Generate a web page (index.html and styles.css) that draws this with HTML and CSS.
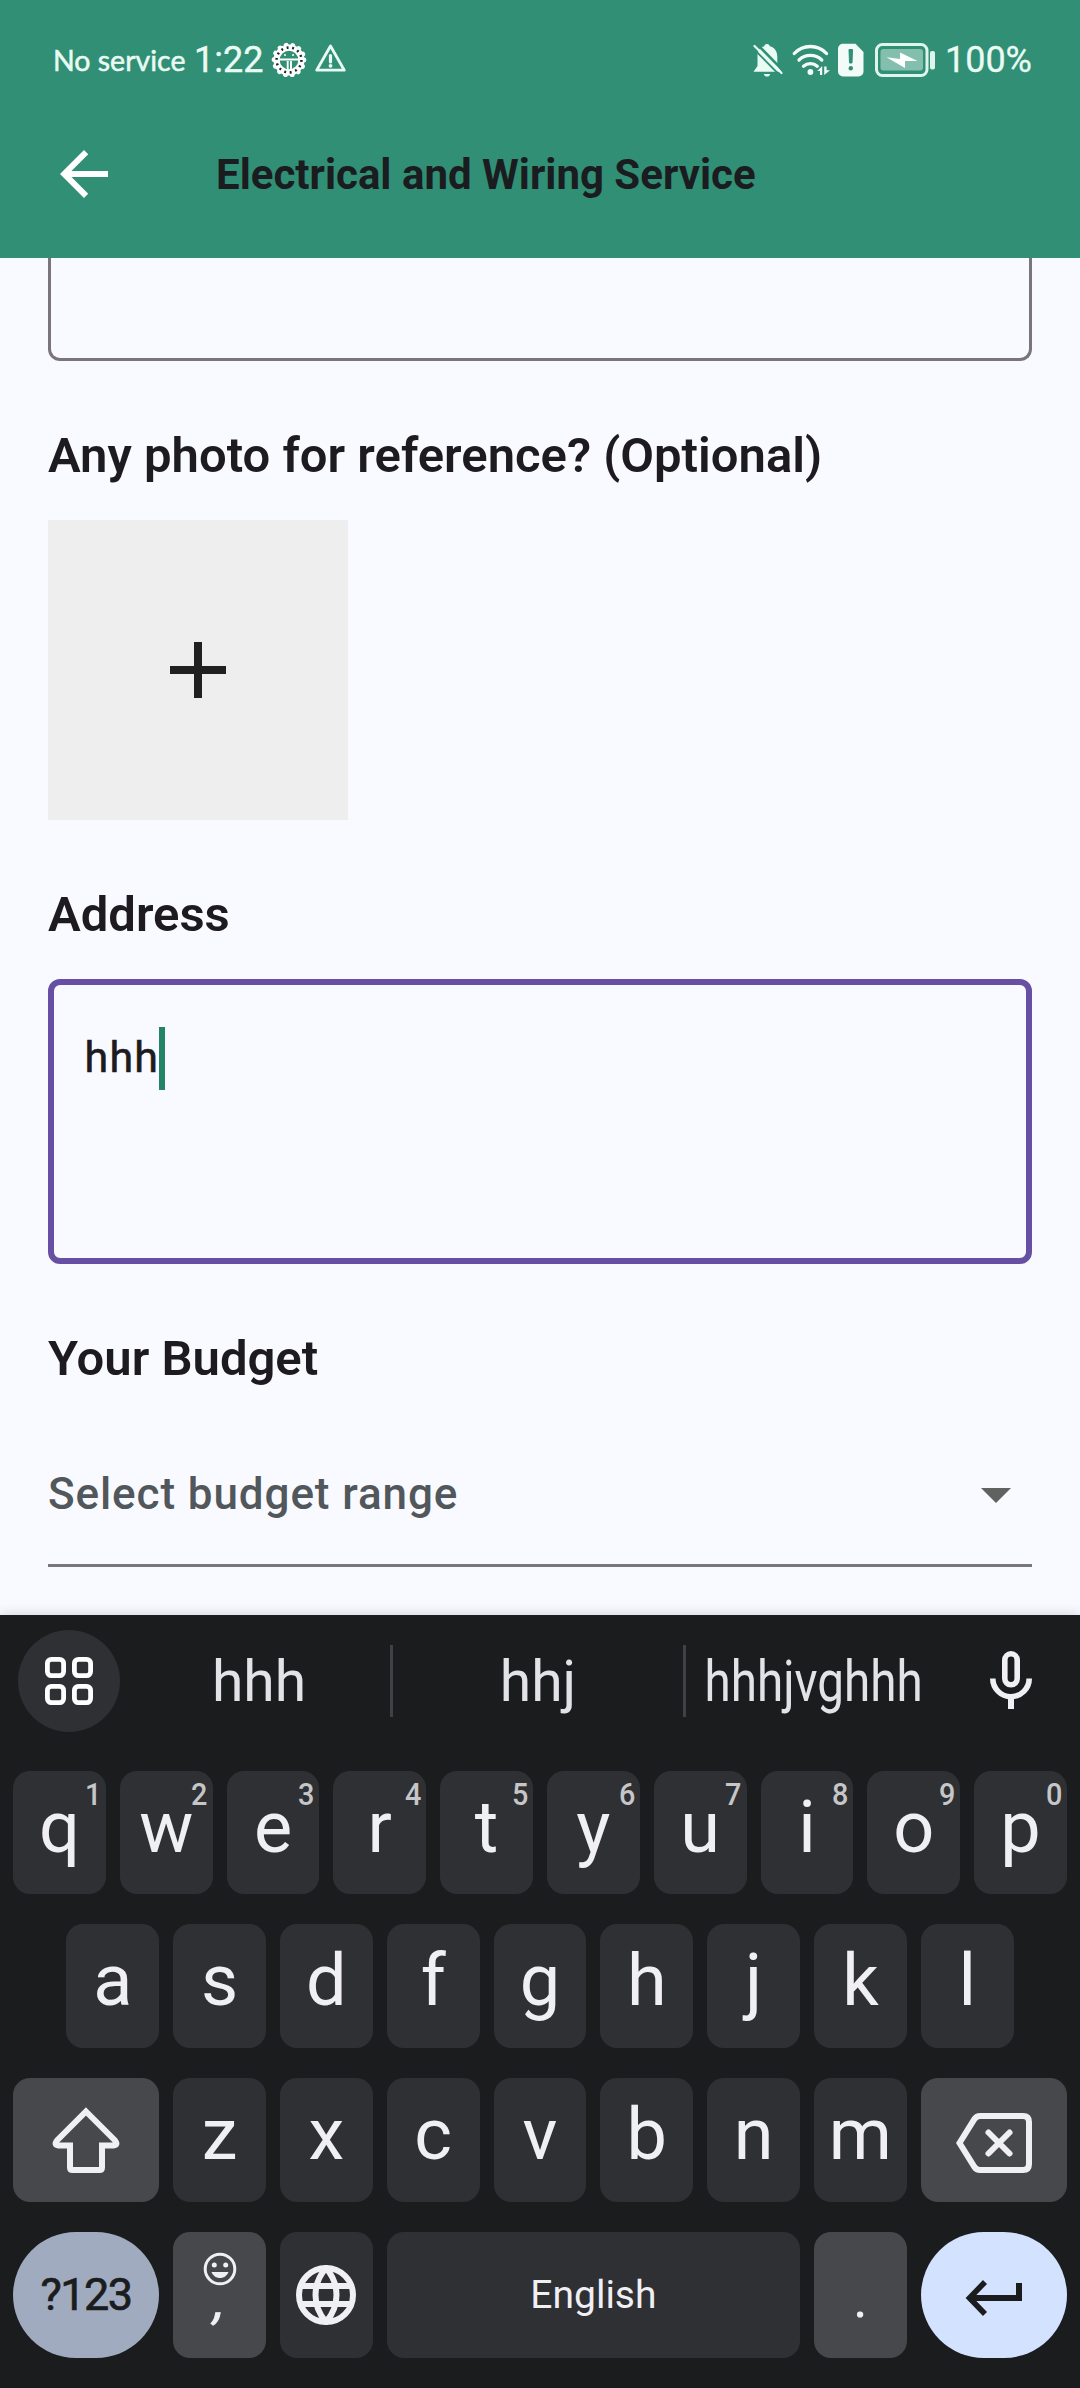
FILE: index.html
```html
<!DOCTYPE html>
<html lang="en">
<head>
<meta charset="utf-8">
<title>Electrical and Wiring Service</title>
<link rel="stylesheet" href="styles.css">
</head>
<body>
<div class="screen">
  <header class="header">
    <div class="status">
      <div class="status-left">
        <span class="carrier">No service</span>
        <span class="clock">1:22</span>
        <svg class="ic-gear" width="36" height="36" viewBox="0 0 36 36">
          <circle cx="18" cy="18" r="13" fill="none" stroke="#fff" stroke-width="5"/>
          <circle cx="18" cy="18" r="15" fill="none" stroke="#fff" stroke-width="4.800" stroke-linecap="round" stroke-dasharray="0.1 6.632"/>
          <circle cx="18" cy="18" r="12.400" fill="none" stroke="#1c2a25" stroke-width="2.600" stroke-dasharray="1.900 3.665"/>
          <circle cx="18" cy="18" r="10.200" fill="#318f75" stroke="#fff" stroke-width="1.800"/>
          <path d="M8 17.500h20M16.700 19v9M20 19v9" stroke="#fff" stroke-width="1.900" fill="none"/>
          <circle cx="14" cy="13" r="1" fill="#fff"/><circle cx="22" cy="13" r="1" fill="#fff"/>
        </svg>
        <svg class="ic-warn" width="33" height="30" viewBox="0 0 33 30">
          <path d="M16.500 3L30.300 27.200H2.700Z" fill="none" stroke="#e9fbf3" stroke-width="2.800" stroke-linejoin="round"/>
          <path d="M16.500 12.500v6.500" stroke="#e9fbf3" stroke-width="3.200" stroke-linecap="round"/>
          <circle cx="16.500" cy="22.800" r="1.900" fill="#e9fbf3"/>
        </svg>
      </div>
      <div class="status-right">
        <svg width="32" height="36" viewBox="0 0 32 36">
          <path d="M15 2c1.800 0 2.600 1 2.800 2.300 4.500 1.200 7.500 5 7.500 10v9l4 6.500H1.500L5.500 24V13.500C5.500 8.500 8.200 5.400 12.200 4.300 12.400 3 13.200 2 15 2Z" fill="#e9fbf3"/>
          <path d="M11.800 32h6.400c-.4 1.600-1.600 2.600-3.200 2.600S12.200 33.600 11.800 32Z" fill="#e9fbf3"/>
          <path d="M4.500 1.500L32 29.500" stroke="#318f75" stroke-width="2.600"/>
          <path d="M2.500 4L29.500 31" stroke="#e9fbf3" stroke-width="2.200" stroke-linecap="round"/>
          <path d="M0.800 6L26.500 32" stroke="#318f75" stroke-width="1.800"/>
        </svg>
        <svg class="ic-wifi" width="39" height="34" viewBox="0 0 39 34">
          <g fill="none" stroke="#f2fbf7" stroke-width="3.300" stroke-linecap="round">
            <path d="M2.300 10.500a22 22 0 0 1 32.200 0"/>
            <path d="M7 17a16.500 16.500 0 0 1 22.800 0"/>
            <path d="M11.500 23.200a10.500 10.500 0 0 1 13.800 0"/>
          </g>
          <circle cx="18.400" cy="29" r="2.900" fill="#f2fbf7"/>
          <path d="M30.200 32v-9l-5 5h2.800v4zM32.200 23.500v8.500l5.800-4.700h-3.400v-3.800z" fill="#f2fbf7"/>
        </svg>
        <svg class="ic-sim" width="27" height="34" viewBox="0 0 27 34">
          <path d="M6 .7h12.500L26.500 9v19.500a5 5 0 0 1-5 5H6a5 5 0 0 1-5-5V5.700a5 5 0 0 1 5-5Z" fill="#f2fbf7"/>
          <path d="M12 6.500h3.500l-.5 13.500h-2.500Z" fill="#318f75" stroke="#318f75" stroke-width="1" stroke-linejoin="round"/>
          <circle cx="13.800" cy="25.200" r="2.200" fill="#318f75"/>
        </svg>
        <svg class="ic-batt" width="61" height="34" viewBox="0 0 61 34">
          <rect x="1.500" y="1.500" width="50.500" height="31" rx="6" fill="none" stroke="#dff5ec" stroke-width="3"/>
          <rect x="5.500" y="6" width="42.500" height="21.500" rx="3" fill="#84bfad"/>
          <path d="M11.500 14.200l13.500 1.800v-6.500l17.500 8.500h-12.500v7Z" fill="#fff"/>
          <rect x="55" y="8" width="5" height="18.500" rx="2" fill="#dff5ec"/>
        </svg>
        <span class="percent">100%</span>
      </div>
    </div>
    <div class="appbar">
      <svg class="back" width="72" height="72" viewBox="0 0 24 24"><path d="M20 11H7.830l5.590-5.590L12 4l-8 8 8 8 1.410-1.410L7.830 13H20v-2z" fill="#fff"/></svg>
      <h1 class="title">Electrical and Wiring Service</h1>
    </div>
  </header>

  <main class="form">
    <div class="details-field"></div>
    <h2 class="label label-photo">Any photo for reference? (Optional)</h2>
    <div class="photo-add">
      <svg width="96" height="96" viewBox="0 0 24 24"><path d="M19 13h-6v6h-2v-6H5v-2h6V5h2v6h6v2z" fill="#202020"/></svg>
    </div>
    <h2 class="label label-address">Address</h2>
    <div class="address-field"><span class="typed">hhh</span><span class="caret"></span></div>
    <h2 class="label label-budget">Your Budget</h2>
    <div class="select">
      <span class="placeholder">Select budget range</span>
      <svg width="72" height="72" viewBox="0 0 24 24"><path d="M7 10l5 5 5-5z" fill="#616161"/></svg>
    </div>
  </main>

  <section class="keyboard">
    <div class="suggestions">
      <div class="apps">
        <svg width="48" height="48" viewBox="0 0 48 48" fill="none" stroke="#fff" stroke-width="4.800">
          <rect x="2.400" y="2.400" width="16.200" height="16.200" rx="4"/><rect x="29.400" y="2.400" width="16.200" height="16.200" rx="4"/>
          <rect x="2.400" y="29.400" width="16.200" height="16.200" rx="4"/><rect x="29.400" y="29.400" width="16.200" height="16.200" rx="4"/>
        </svg>
      </div>
      <span class="sug sug-1">hhh</span>
      <i class="divider"></i>
      <span class="sug sug-2">hhj</span>
      <i class="divider"></i>
      <span class="sug sug-3"><span class="squeeze">hhhjvghhh</span></span>
      <svg class="mic" width="42" height="58" viewBox="0 0 42 58" fill="none" stroke="#f0eff4">
        <rect x="14.800" y="2.800" width="12.400" height="31" rx="6.200" stroke-width="5.600"/>
        <path d="M2.800 27.500a18.200 18.200 0 0 0 36.400 0" stroke-width="5.600"/>
        <path d="M21 46v12" stroke-width="6"/>
      </svg>
    </div>
    <div class="row row-1">
      <div class="key">q<sup>1</sup></div><div class="key">w<sup>2</sup></div><div class="key">e<sup>3</sup></div><div class="key">r<sup>4</sup></div><div class="key">t<sup>5</sup></div><div class="key">y<sup>6</sup></div><div class="key">u<sup>7</sup></div><div class="key">i<sup>8</sup></div><div class="key">o<sup>9</sup></div><div class="key">p<sup>0</sup></div>
    </div>
    <div class="row row-2">
      <div class="key">a</div><div class="key">s</div><div class="key">d</div><div class="key">f</div><div class="key">g</div><div class="key">h</div><div class="key">j</div><div class="key">k</div><div class="key">l</div>
    </div>
    <div class="row row-3">
      <div class="key mod wide shift">
        <svg width="70" height="68" viewBox="0 0 70 68"><path d="M35 5.500L64 34.500Q67.500 39 62.500 39.500H51V61.500Q51 64 48.500 64H21.500Q19 64 19 61.500V39.500H7.500Q2.500 39 6 34.500Z" fill="none" stroke="#f0eff4" stroke-width="6"/></svg>
      </div>
      <div class="key">z</div><div class="key">x</div><div class="key">c</div><div class="key">v</div><div class="key">b</div><div class="key">n</div><div class="key">m</div>
      <div class="key mod wide back-key">
        <svg width="76" height="60" viewBox="0 0 76 60" fill="none" stroke="#f0eff4" stroke-width="6">
          <path d="M3.500 30L18.500 6Q20.500 3 24 3H67Q73 3 73 9V51Q73 57 67 57H24Q20.500 57 18.500 54Z"/>
          <path d="M32.500 19.500L53.500 40.500M53.500 19.500L32.500 40.500" stroke-linecap="round"/>
        </svg>
      </div>
    </div>
    <div class="row row-4">
      <div class="key wide sym">?123</div>
      <div class="key mod comma">
        <svg width="34" height="34" viewBox="0 0 34 34"><circle cx="17" cy="17" r="14.800" fill="none" stroke="#f0eff4" stroke-width="3"/><circle cx="11.300" cy="13" r="2.500" fill="#f0eff4"/><circle cx="22.700" cy="13" r="2.500" fill="#f0eff4"/><path d="M8.500 20h17c-1.500 3.900-4.700 6-8.500 6s-7-2.100-8.500-6Z" fill="#f0eff4"/></svg>
        <span>,</span>
      </div>
      <div class="key globe">
        <svg width="60" height="60" viewBox="0 0 60 60" fill="none" stroke="#f0eff4" stroke-width="6"><circle cx="30" cy="30" r="27"/><path d="M5 21H55M5 39H55"/><path d="M30 3Q19.500 15 19.500 30T30 57Q40.500 45 40.500 30T30 3Z"/></svg>
      </div>
      <div class="key space">English</div>
      <div class="key mod dot">.</div>
      <div class="key wide enter">
        <svg width="58" height="36" viewBox="0 0 58 36" fill="none" stroke="#1b1c1e" stroke-width="6"><path d="M54 3V18H6"/><path d="M20 2L4.500 18L20 34" stroke-width="5.600"/></svg>
      </div>
    </div>
  </section>
</div>
</body>
</html>
```
FILE: styles.css
```css
* { box-sizing: border-box; margin: 0; padding: 0; }
body { width: 1080px; font-family: Roboto, "Liberation Sans", sans-serif; background: #f9faff; }
svg { display: block; flex: none; }
.screen { width: 1080px; height: 2388px; display: flex; flex-direction: column; overflow: hidden; }

.header { height: 258px; background: #318f75; flex: none; }
.status { height: 120px; display: flex; justify-content: space-between; align-items: center; padding: 0 48px 0 53px; color: #e9fbf3; }
.status-left, .status-right { display: flex; align-items: center; white-space: nowrap; }
.carrier { font: 400 28.500px/40px Lato, sans-serif; width: 141px; margin-bottom: 1px; -webkit-text-stroke: .5px #e9fbf3; }
.clock { font-size: 36px; line-height: 40px; width: 77px; -webkit-text-stroke: .4px #e9fbf3; }
.ic-warn { margin: 0 0 4px 7px; }
.status-right svg { margin-right: 9px; }
.status-right .ic-wifi { margin: 0 10px 0 -1px; }
.status-right .ic-sim { margin: 0 11px 0 -4px; }
.percent { font-size: 36px; line-height: 40px; -webkit-text-stroke: .3px #e9fbf3; }
.appbar { height: 108px; display: flex; align-items: center; padding-left: 48px; }
.title { margin-left: 96px; padding-top: 1px; font-size: 42px; font-weight: 700; line-height: 60px; color: #1b1c1f; white-space: nowrap; }

.form { flex: none; height: 1357px; padding: 0 48px; display: flex; flex-direction: column; }
.details-field { height: 103px; border: 3px solid #79747e; border-top: 0; border-radius: 0 0 12px 12px; }
.label { font-size: 49px; line-height: 72px; font-weight: 600; color: #1d1b20; white-space: nowrap; }
.label-photo { margin-top: 59px; }
.photo-add { width: 300px; height: 300px; margin-top: 28px; background: #eee; display: flex; align-items: center; justify-content: center; }
.label-address { margin-top: 59px; }
.address-field { height: 285px; margin-top: 28px; border: 6px solid #6750a4; border-radius: 12px; padding: 42px 0 0 30.500px; display: flex; align-items: flex-start; }
.typed { font-size: 43px; line-height: 60px; font-weight: 400; letter-spacing: 1.200px; color: #1d1b20; -webkit-text-stroke: .6px #1d1b20; }
.caret { width: 6px; height: 63px; background: #248466; }
.label-budget { margin-top: 59px; }
.select { height: 148px; margin-top: 24px; border-bottom: 3px solid #79747e; display: flex; justify-content: space-between; align-items: center; padding-top: 5px; }
.placeholder { font-size: 44px; line-height: 60px; font-weight: 480; letter-spacing: .9px; color: #51575b; white-space: nowrap; }

.keyboard { flex: 1; background: #1b1c1e; padding: 15px 13px 0; color: #f0eff4; box-shadow: 0 0 12px rgba(0, 0, 0, .18); }
.suggestions { height: 102px; display: flex; align-items: center; padding-left: 5px; }
.apps { width: 102px; height: 102px; border-radius: 50%; background: #2f3034; display: flex; align-items: center; justify-content: center; }
.sug { font-size: 57px; line-height: 60px; padding-top: 1px; font-weight: 400; color: #e3e2e6; text-align: center; white-space: nowrap; }
.sug-1 { width: 270px; padding-right: 2px; padding-left: 10px; }
.sug-2 { width: 290px; }
.sug-3 { width: 255px; display: flex; justify-content: center; }
.squeeze { transform: scaleX(.835); flex: none; }
.divider { width: 3px; height: 72px; background: #404144; flex: none; }
.mic { margin: -2px 0 0 49px; }

.row { display: flex; gap: 14px; height: 124px; }
.row-1 { margin-top: 39px; height: 123px; }
.row-2 { margin-top: 30px; justify-content: center; }
.row-3 { margin-top: 30px; }
.row-4 { margin-top: 30px; height: 126px; }
.key { position: relative; flex: 0 0 92.800px; border-radius: 17px; background: #2f3034; text-align: center; font-size: 72px; line-height: 113px; }
.key sup { position: absolute; right: 4px; top: 3px; font-size: 32px; line-height: 40px; font-weight: 500; color: #c6c6c9; transform: scaleX(.9); }
.mod { background: #47484b; }
.wide { flex: 1 1 0; }
.shift, .back-key, .globe, .enter { display: flex; align-items: center; justify-content: center; }
.back-key { padding-top: 6px; }
.sym { flex: 0 0 146.200px; border-radius: 63px; background: #a1abc0; color: #1b1c1e; font-size: 45px; font-weight: 400; letter-spacing: -1.500px; line-height: 126px; -webkit-text-stroke: .7px #1b1c1e; }
.comma { display: flex; flex-direction: column; align-items: center; padding-top: 20px; }
.comma span { font-size: 50px; line-height: 52px; margin-top: -11px; transform: skewX(-12deg); -webkit-text-stroke: 1px #f0eff4; }
.space { flex: 1; font-size: 39px; line-height: 126px; }
.dot { font-size: 56px; line-height: 132px; }
.enter { flex: 0 0 146.200px; border-radius: 63px; background: #d3e2ff; padding-top: 6px; }
```
